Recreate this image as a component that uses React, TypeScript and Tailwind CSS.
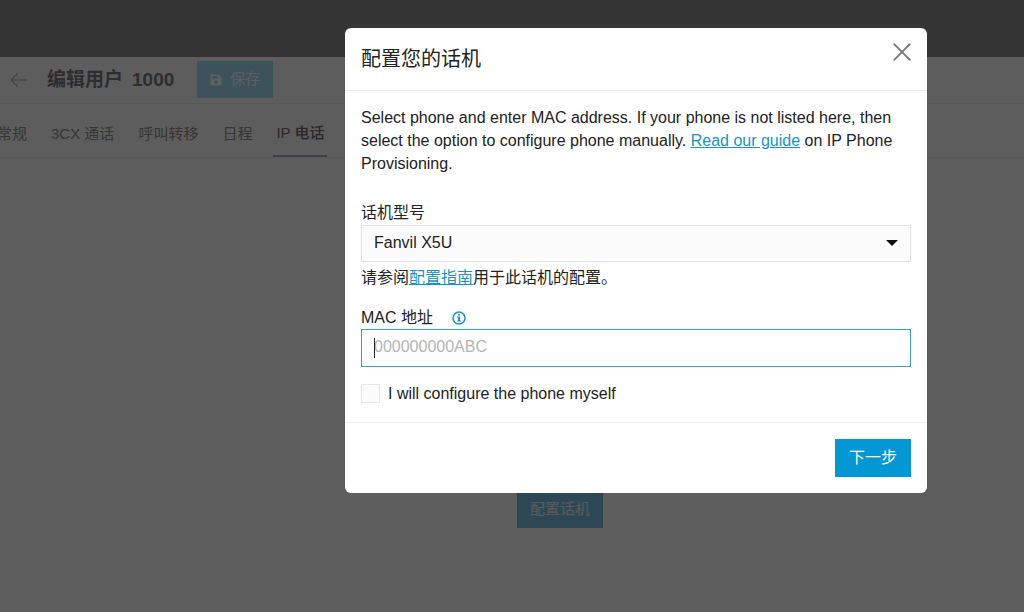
import { useState } from "react"

const tabs = ["常规", "3CX 通话", "呼叫转移", "日程", "IP 电话"]

const ArrowLeft = () => (
  <svg className="h-4 w-[17px]" viewBox="0 0 17 16" fill="none" stroke="currentColor" strokeWidth="1.2">
    <path d="M17 8H1M7.5 1.5 1 8l6.500 6.500" />
  </svg>
)

const SaveIcon = () => (
  <svg className="h-3 w-3" viewBox="0 0 12 12" fill="currentColor" fillRule="evenodd">
    <path d="M1.5.5h7L11.500 3.500v7a1 1 0 0 1-1 1h-9a1 1 0 0 1-1-1v-9a1 1 0 0 1 1-1ZM2.500 2v2.500h5.500V2ZM6 6.500a1.600 1.600 0 1 0 0 3.200 1.600 1.600 0 0 0 0-3.200Z" />
  </svg>
)

const CloseIcon = () => (
  <svg className="h-[18px] w-[18px]" viewBox="0 0 18 18" fill="none" stroke="currentColor" strokeWidth="1.8" strokeLinecap="round">
    <path d="M1.200 1.200 16.800 16.800M16.800 1.200 1.200 16.800" />
  </svg>
)

const InfoIcon = () => (
  <svg className="h-[14px] w-[14px]" viewBox="0 0 14 14" fill="none">
    <circle cx="7" cy="7" r="6" stroke="currentColor" strokeWidth="1.500" />
    <path fill="currentColor" d="M6.100 2.900h1.900v1.700H6.100ZM5.200 5.600H8v3.800h.9v1.200H5.200V9.400h.9V6.800h-.9Z" />
  </svg>
)

const UserPage = () => {
  return (
    <div className="flex min-h-screen flex-col bg-[#fcfcfc] text-[#929292]">
      <div className="h-[57px] bg-[#909090]" />
      <header className="flex h-[47px] items-center border-b border-[#f0f0f0] pb-[1px] pl-[10px]">
        <button aria-label="返回" className="mr-5 text-[#b0b0b0]">
          <ArrowLeft />
        </button>
        <h1 className="mr-[23px] flex gap-[9px] text-[19px] font-bold leading-6 text-[#7c7c7c]">
          <span>编辑用户</span>
          <span>1000</span>
        </h1>
        <button className="flex h-[37px] items-center gap-2 bg-[#a5dff6] px-[13px] text-[15px] text-white">
          <SaveIcon />
          保存
        </button>
      </header>
      <nav className="-ml-[3px] flex h-[54px] items-stretch gap-6 border-b border-[#f0f0f0] text-[15px]">
        {tabs.map((tab) => (
          <a
            key={tab}
            href="#"
            className={
              tab === "IP 电话"
                ? "-mx-[3px] flex items-center border-b-2 border-[#83b9d0] px-[3px] pt-2 font-medium text-[#707070]"
                : "flex items-center pt-2"
            }
          >
            {tab}
          </a>
        ))}
      </nav>
      <div className="flex grow items-end justify-center pb-[84px] pl-24">
        <button className="h-[37px] bg-[#7ac3e3] px-[13px] text-[15px] text-[#f4f4f4]">配置话机</button>
      </div>
    </div>
  )
}

const PhoneDialog = () => {
  const [model, setModel] = useState("Fanvil X5U")
  const [mac, setMac] = useState("")
  const [manual, setManual] = useState(false)

  return (
    <div role="dialog" aria-labelledby="dialog-title" className="w-[582px] rounded-md bg-white text-[#222]">
      <div className="flex h-[63px] items-start justify-between border-b border-[#eee] px-4 pt-[15px]">
        <h2 id="dialog-title" className="text-xl leading-8">配置您的话机</h2>
        <button aria-label="关闭" className="text-[#777]">
          <CloseIcon />
        </button>
      </div>

      <div className="px-4 pb-[17px] pt-[15px] text-base leading-[23px]">
        <p>
          Select phone and enter MAC address. If your phone is not listed here, then
          select the option to configure phone manually.{" "}
          <a href="#" className="text-[#1a93c0] underline">Read our guide</a> on IP Phone
          Provisioning.
        </p>

        <label htmlFor="model" className="mb-[1px] mt-[26px] block">话机型号</label>
        <div className="relative">
          <select
            id="model"
            value={model}
            onChange={(e) => setModel(e.target.value)}
            className="block h-[37px] w-full appearance-none border border-[#e2e2e2] bg-[#fbfbfb] px-3 pb-[2px]"
          >
            <option>Fanvil X5U</option>
          </select>
          <svg className="pointer-events-none absolute right-[13px] top-[15px] h-[6px] w-3" viewBox="0 0 12 6">
            <path d="M0 0h12L6 6Z" fill="#111" />
          </svg>
        </div>
        <p className="mt-1">
          请参阅<a href="#" className="text-[#1a93c0] underline">配置指南</a>用于此话机的配置。
        </p>

        <div className="mt-[17px] flex items-center gap-[19px]">
          <label htmlFor="mac">MAC 地址</label>
          <span className="text-[#1a93c0]">
            <InfoIcon />
          </span>
        </div>
        <div className="relative">
          <input
            id="mac"
            value={mac}
            onChange={(e) => setMac(e.target.value)}
            placeholder="000000000ABC"
            className="block h-[38px] w-full border border-[#3aa0bd] px-3 pb-[2px] outline-none placeholder:text-[#b4b4b4]"
          />
          <span className="absolute left-[13px] top-[9px] h-5 w-px bg-[#222]" />
        </div>

        <label className="mt-[15px] flex items-center gap-2">
          <input
            type="checkbox"
            checked={manual}
            onChange={(e) => setManual(e.target.checked)}
            className="h-[19px] w-[19px] appearance-none border border-[#e6e6e6] bg-[#fbfbfb] checked:bg-[#0596d4]"
          />
          I will configure the phone myself
        </label>
      </div>

      <div className="flex justify-end border-t border-[#eee] px-4 py-4">
        <button className="h-[38px] bg-[#0596d4] px-[14px] text-base text-white">下一步</button>
      </div>
    </div>
  )
}

export default function App() {
  return (
    <div className="relative font-['Liberation_Sans','Noto_Sans_CJK_SC',sans-serif]">
      <UserPage />
      <div className="absolute inset-0 flex items-start justify-end bg-black/63 pr-[97px] pt-7">
        <PhoneDialog />
      </div>
    </div>
  )
}
